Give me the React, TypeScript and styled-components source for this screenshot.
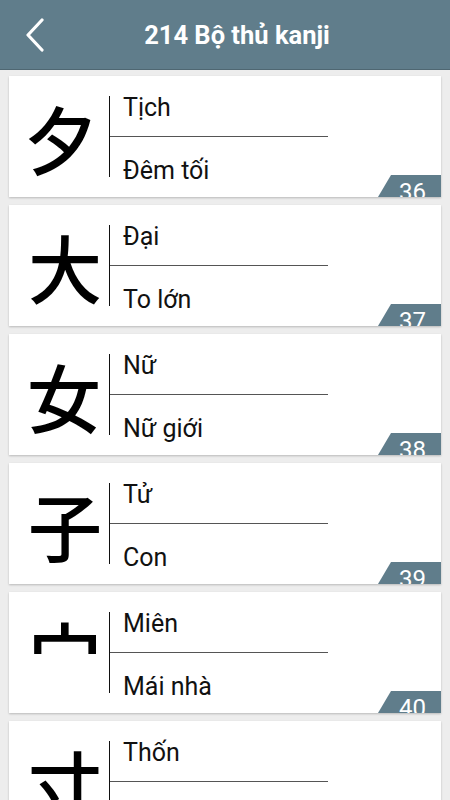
import React from "react";
import styled, { createGlobalStyle } from "styled-components";

const Global = createGlobalStyle`
  html, body { margin: 0; padding: 0; background: #ededed; }
  body { font-family: Roboto, "Noto Sans", Arial, sans-serif; overflow: hidden; }
  * { box-sizing: border-box; }
`;

const Page = styled.div`
  width: 450px;
  height: 800px;
  overflow: hidden;
  background: #ededed;
  display: flex;
  flex-direction: column;
`;

const Header = styled.header`
  height: 70px;
  flex: none;
  background: #607d8b;
  border-bottom: 1px solid #4f6772;
  display: flex;
  align-items: center;
`;

const Back = styled.button`
  width: 60px;
  height: 70px;
  border: 0;
  background: none;
  padding: 0 0 0 25px;
  display: flex;
  align-items: center;
  cursor: pointer;
`;

const Title = styled.h1`
  margin: 0;
  flex: 1;
  text-align: center;
  padding-right: 36px;
  color: #ffffff;
  font-family: Roboto, Arial, sans-serif;
  font-weight: 700;
  font-size: 25.5px;
`;

const List = styled.div`
  display: flex;
  flex-direction: column;
  gap: 8px;
  padding: 6px 9px 0 9px;
`;

const Card = styled.div`
  height: 121px;
  flex: none;
  background: #ffffff;
  box-shadow: 0 1px 2px rgba(0, 0, 0, 0.22);
  display: flex;
  position: relative;
  overflow: hidden;
`;

const KanjiCell = styled.div<{ $dx: number; $lift: number }>`
  width: 100px;
  flex: none;
  display: flex;
  align-items: center;
  justify-content: center;
  padding-left: ${(p) => p.$dx}px;
  padding-bottom: ${(p) => p.$lift}px;
  font-family: "Noto Sans CJK JP", "Noto Sans CJK SC", sans-serif;
  font-weight: 500;
  font-size: 74px;
  line-height: 1;
  color: #000;
`;

const Info = styled.div`
  margin-top: 20px;
  height: 81px;
  width: 219px;
  border-left: 1px solid #111;
  display: flex;
  flex-direction: column;
`;

const Reading = styled.div`
  height: 41px;
  flex: none;
  border-bottom: 1px solid #555;
  padding-left: 13px;
  font-size: 25px;
  line-height: 24px;
  color: #111;
  white-space: nowrap;
`;

const Meaning = styled.div`
  padding-left: 13px;
  padding-top: 22px;
  font-size: 25px;
  line-height: 24px;
  color: #111;
  white-space: nowrap;
`;

const Badge = styled.div`
  position: absolute;
  right: 0;
  bottom: 0;
  width: 63px;
  height: 22px;
  background: #607d8b;
  clip-path: polygon(13px 0, 100% 0, 100% 100%, 0 100%);
  overflow: hidden;
  color: #ffffff;
  font-size: 24px;
  line-height: 24px;
  padding-left: 21px;
  padding-top: 5px;
`;

type Item = { k: string; r: string; m: string; n: number; dx: number; lift: number };

const items: Item[] = [
  { k: "夕", r: "Tịch", m: "Đêm tối", n: 36, dx: 4, lift: 0 },
  { k: "大", r: "Đại", m: "To lớn", n: 37, dx: 12, lift: 0 },
  { k: "女", r: "Nữ", m: "Nữ giới", n: 38, dx: 10, lift: 0 },
  { k: "子", r: "Tử", m: "Con", n: 39, dx: 12, lift: 0 },
  { k: "宀", r: "Miên", m: "Mái nhà", n: 40, dx: 12, lift: 22 },
  { k: "寸", r: "Thốn", m: "Tấc", n: 41, dx: 12, lift: 0 },
];

export default function App() {
  return (
    <Page>
      <Global />
      <Header>
        <Back aria-label="back">
          <svg width="20" height="34" viewBox="0 0 20 34">
            <polyline
              points="17,2 3,17 17,32"
              fill="none"
              stroke="#ffffff"
              strokeWidth="3.2"
              strokeLinecap="round"
              strokeLinejoin="round"
            />
          </svg>
        </Back>
        <Title>214 Bộ thủ kanji</Title>
      </Header>
      <List>
        {items.map((it) => (
          <Card key={it.n}>
            <KanjiCell $dx={it.dx} $lift={it.lift}>{it.k}</KanjiCell>
            <Info>
              <Reading>{it.r}</Reading>
              <Meaning>{it.m}</Meaning>
            </Info>
            <Badge>{it.n}</Badge>
          </Card>
        ))}
      </List>
    </Page>
  );
}
